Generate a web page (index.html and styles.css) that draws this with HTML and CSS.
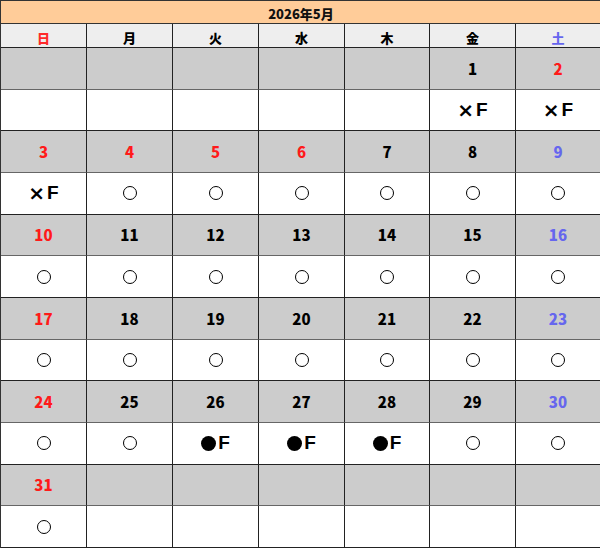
FILE: index.html
```html
<!DOCTYPE html>
<html lang="ja">
<head>
<meta charset="utf-8">
<title>2026年5月</title>
<link rel="stylesheet" href="styles.css">
</head>
<body>
<div class="cal">
  <div class="title">2026年5月</div>

  <div class="cell head sun">日</div>
  <div class="cell head">月</div>
  <div class="cell head">火</div>
  <div class="cell head">水</div>
  <div class="cell head">木</div>
  <div class="cell head">金</div>
  <div class="cell head sat">土</div>

  <div class="cell day"></div>
  <div class="cell day"></div>
  <div class="cell day"></div>
  <div class="cell day"></div>
  <div class="cell day"></div>
  <div class="cell day">1</div>
  <div class="cell day red">2</div>
  <div class="cell mark"></div>
  <div class="cell mark"></div>
  <div class="cell mark"></div>
  <div class="cell mark"></div>
  <div class="cell mark"></div>
  <div class="cell mark"><span class="x">×</span><b>F</b></div>
  <div class="cell mark"><span class="x">×</span><b>F</b></div>

  <div class="cell day red">3</div>
  <div class="cell day red">4</div>
  <div class="cell day red">5</div>
  <div class="cell day red">6</div>
  <div class="cell day">7</div>
  <div class="cell day">8</div>
  <div class="cell day blue">9</div>
  <div class="cell mark"><span class="x">×</span><b>F</b></div>
  <div class="cell mark"><span class="circle"></span></div>
  <div class="cell mark"><span class="circle"></span></div>
  <div class="cell mark"><span class="circle"></span></div>
  <div class="cell mark"><span class="circle"></span></div>
  <div class="cell mark"><span class="circle"></span></div>
  <div class="cell mark"><span class="circle"></span></div>

  <div class="cell day red">10</div>
  <div class="cell day">11</div>
  <div class="cell day">12</div>
  <div class="cell day">13</div>
  <div class="cell day">14</div>
  <div class="cell day">15</div>
  <div class="cell day blue">16</div>
  <div class="cell mark"><span class="circle"></span></div>
  <div class="cell mark"><span class="circle"></span></div>
  <div class="cell mark"><span class="circle"></span></div>
  <div class="cell mark"><span class="circle"></span></div>
  <div class="cell mark"><span class="circle"></span></div>
  <div class="cell mark"><span class="circle"></span></div>
  <div class="cell mark"><span class="circle"></span></div>

  <div class="cell day red">17</div>
  <div class="cell day">18</div>
  <div class="cell day">19</div>
  <div class="cell day">20</div>
  <div class="cell day">21</div>
  <div class="cell day">22</div>
  <div class="cell day blue">23</div>
  <div class="cell mark"><span class="circle"></span></div>
  <div class="cell mark"><span class="circle"></span></div>
  <div class="cell mark"><span class="circle"></span></div>
  <div class="cell mark"><span class="circle"></span></div>
  <div class="cell mark"><span class="circle"></span></div>
  <div class="cell mark"><span class="circle"></span></div>
  <div class="cell mark"><span class="circle"></span></div>

  <div class="cell day red">24</div>
  <div class="cell day">25</div>
  <div class="cell day">26</div>
  <div class="cell day">27</div>
  <div class="cell day">28</div>
  <div class="cell day">29</div>
  <div class="cell day blue">30</div>
  <div class="cell mark"><span class="circle"></span></div>
  <div class="cell mark"><span class="circle"></span></div>
  <div class="cell mark"><span class="dot"></span><b>F</b></div>
  <div class="cell mark"><span class="dot"></span><b>F</b></div>
  <div class="cell mark"><span class="dot"></span><b>F</b></div>
  <div class="cell mark"><span class="circle"></span></div>
  <div class="cell mark"><span class="circle"></span></div>

  <div class="cell day red">31</div>
  <div class="cell day"></div>
  <div class="cell day"></div>
  <div class="cell day"></div>
  <div class="cell day"></div>
  <div class="cell day"></div>
  <div class="cell day"></div>
  <div class="cell mark"><span class="circle"></span></div>
  <div class="cell mark"></div>
  <div class="cell mark"></div>
  <div class="cell mark"></div>
  <div class="cell mark"></div>
  <div class="cell mark"></div>
  <div class="cell mark"></div>
</div>
</body>
</html>
```
FILE: styles.css
```css
* { box-sizing: border-box; }
html, body { margin: 0; padding: 0; background: #fff; }
body { font-family: "Noto Sans CJK JP", "Noto Sans", sans-serif; }

.cal {
  width: 600px;
  height: 548px;
  display: grid;
  grid-template-columns: 86px 86px 86px 86px 85px 86px 85px;
  grid-template-rows: 23px 24px repeat(12, 1fr);
  border-left: 1px solid #333;
  border-top: 1px solid #333;
  border-right: 2px solid #333;
}

.title {
  grid-column: 1 / -1;
  background: #ffcc99;
  border-bottom: 1px solid #333;
  display: flex;
  align-items: center;
  justify-content: center;
  font-weight: 900;
  font-size: 13px;
  color: #111;
  padding-top: 2px;
}

.cell {
  display: flex;
  align-items: center;
  justify-content: center;
  border-right: 1px solid #222;
  border-bottom: 1px solid #555;
  color: #000;
}
.cell:nth-child(7n+1) { border-right-color: #777; }

.head {
  background: #eeeeee;
  font-weight: 900;
  font-size: 13px;
  border-bottom-color: #222;
  padding-top: 3px;
}

.day {
  background: #cccccc;
  font-weight: 900;
  font-size: 15px;
  border-bottom-color: #666;
}

.mark {
  background: #fff;
  font-size: 19px;
  font-weight: 400;
  border-bottom-color: #222;
}
.mark .x {
  font-family: "DejaVu Sans", sans-serif;
  font-weight: 700;
  font-size: 20px;
  margin-right: 1px;
}
.mark b {
  font-family: "Liberation Sans", sans-serif;
  font-weight: 700;
  font-size: 19px;
  margin-left: 1px;
}

.circle {
  display: inline-block;
  width: 14px;
  height: 14px;
  border: 1.2px solid #000;
  border-radius: 50%;
}
.dot {
  display: inline-block;
  width: 15px;
  height: 15px;
  background: #000;
  border-radius: 50%;
  margin-right: 1px;
}

.red { color: #ff1a1a; }
.sun { color: #ff2a2a; }
.blue, .sat { color: #6666ee; }
```
